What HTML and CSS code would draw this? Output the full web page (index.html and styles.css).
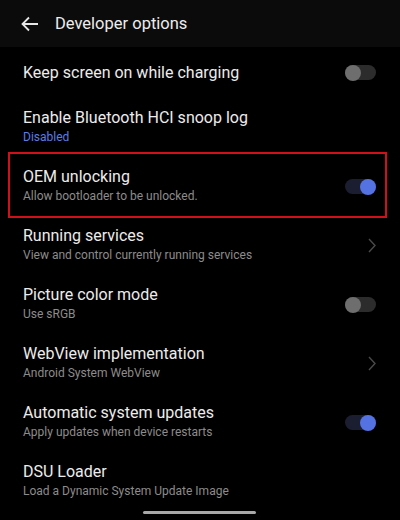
FILE: index.html
```html
<!DOCTYPE html>
<html>
    <head>
        <title>Developer options</title>
        <link rel="stylesheet" href="styles.css">
    </head>
    <body>
        <div class="header">
            <svg class="back" width="18" height="16" viewBox="0 0 18 16">
                <path d="M17 8H2M8 1.5L1.5 8L8 14.5" fill="none" stroke="#e6e6e6" stroke-width="1.8"/>
            </svg>
            <span class="header-title">Developer options</span>
        </div>
        <div class="list">
            <div class="row single">
                <div class="text">
                    <div class="title">Keep screen on while charging</div>
                </div>
                <span class="toggle"></span>
            </div>
            <div class="row">
                <div class="text">
                    <div class="title">Enable Bluetooth HCI snoop log</div>
                    <div class="sub blue">Disabled</div>
                </div>
            </div>
            <div class="row marked">
                <div class="text">
                    <div class="title">OEM unlocking</div>
                    <div class="sub">Allow bootloader to be unlocked.</div>
                </div>
                <span class="toggle on"></span>
            </div>
            <div class="row">
                <div class="text">
                    <div class="title">Running services</div>
                    <div class="sub">View and control currently running services</div>
                </div>
                <svg class="chevron" width="8" height="15" viewBox="0 0 8 15">
                    <path d="M1 1L7 7.5L1 14" fill="none" stroke="#4a4a4a" stroke-width="1.4"/>
                </svg>
            </div>
            <div class="row">
                <div class="text">
                    <div class="title">Picture color mode</div>
                    <div class="sub">Use sRGB</div>
                </div>
                <span class="toggle"></span>
            </div>
            <div class="row">
                <div class="text">
                    <div class="title">WebView implementation</div>
                    <div class="sub">Android System WebView</div>
                </div>
                <svg class="chevron" width="8" height="15" viewBox="0 0 8 15">
                    <path d="M1 1L7 7.5L1 14" fill="none" stroke="#4a4a4a" stroke-width="1.4"/>
                </svg>
            </div>
            <div class="row">
                <div class="text">
                    <div class="title">Automatic system updates</div>
                    <div class="sub">Apply updates when device restarts</div>
                </div>
                <span class="toggle on"></span>
            </div>
            <div class="row">
                <div class="text">
                    <div class="title">DSU Loader</div>
                    <div class="sub">Load a Dynamic System Update Image</div>
                </div>
            </div>
        </div>
        <div class="home-bar"></div>
    </body>
</html>
```

FILE: styles.css
```css
html, body {
    margin: 0;
    height: 520px;
    overflow: hidden;
}

body {
    position: relative;
    background-color: #000;
    color: #ececec;
    font-family: Roboto, 'Liberation Sans', sans-serif;
}

.header {
    height: 47px;
    background-color: #0b0b0b;
    display: flex;
    align-items: center;
    padding-left: 21px;
    gap: 16px;
}

.header-title {
    font-size: 16.5px;
    color: #ededed;
}

.list {
    padding: 0 23px;
}

.row {
    display: flex;
    align-items: center;
    padding: 10px 0;
    min-height: 39px;
}

.row.single {
    min-height: 51px;
    padding: 0;
}

.text {
    flex: 1;
}

.title {
    font-size: 16px;
    line-height: 20px;
}

.sub {
    font-size: 12px;
    line-height: 19px;
    color: #8c8c8c;
}

.sub.blue {
    color: #5b7de6;
}

/* red box drawn over the OEM row */
.marked {
    position: relative;
}

.marked::after {
    content: '';
    position: absolute;
    left: -15px;
    right: -10px;
    top: -5px;
    bottom: -2px;
    border: 2px solid #d2101a;
}

.toggle {
    position: relative;
    width: 31px;
    height: 15px;
    border-radius: 8px;
    background-color: #2c2c2c;
    margin-right: 1px;
}

.toggle::before {
    content: '';
    position: absolute;
    left: 0;
    top: -0.5px;
    width: 16px;
    height: 16px;
    border-radius: 50%;
    background-color: #6e6e6e;
}

.toggle.on {
    background-color: #1b1e30;
}

.toggle.on::before {
    left: auto;
    right: 0;
    background-color: #5572e2;
}

.chevron {
    margin-right: 1px;
}

.home-bar {
    position: absolute;
    left: 143px;
    bottom: 6px;
    width: 113px;
    height: 3px;
    border-radius: 2px;
    background-color: #a8a8a8;
}
```
